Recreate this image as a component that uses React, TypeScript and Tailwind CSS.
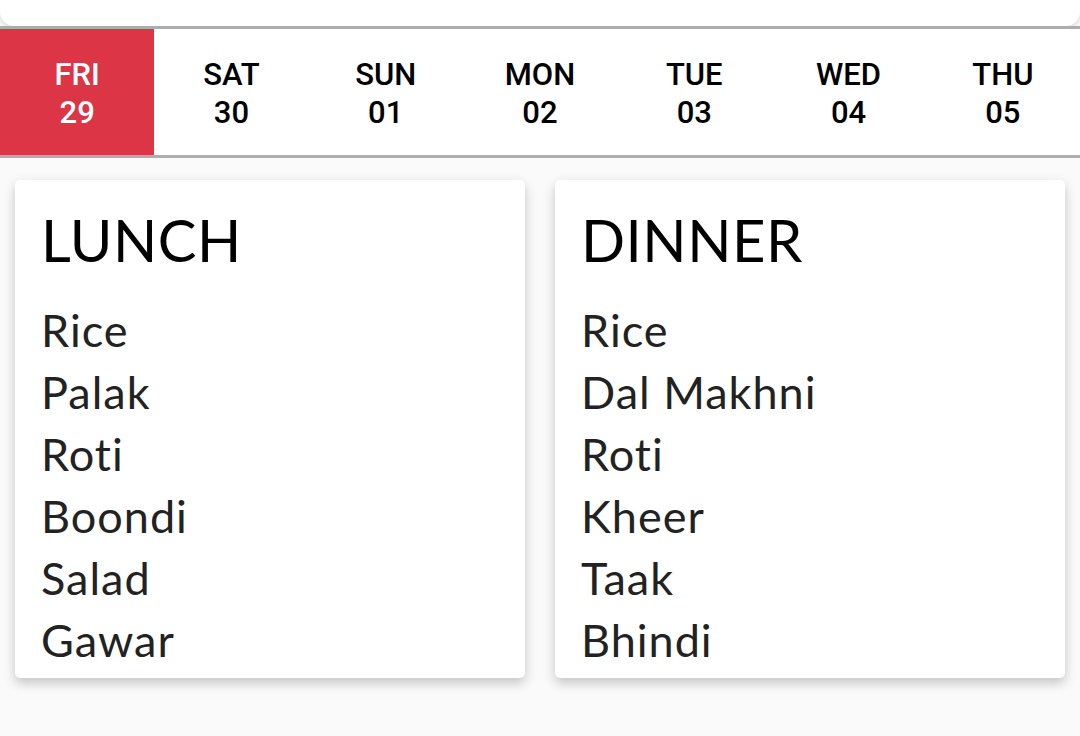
import React from "react";

const days = [
  { d: "FRI", n: "29", active: true },
  { d: "SAT", n: "30" },
  { d: "SUN", n: "01" },
  { d: "MON", n: "02" },
  { d: "TUE", n: "03" },
  { d: "WED", n: "04" },
  { d: "THU", n: "05" },
];

const meals = [
  { title: "LUNCH", items: ["Rice", "Palak", "Roti", "Boondi", "Salad", "Gawar"] },
  { title: "DINNER", items: ["Rice", "Dal Makhni", "Roti", "Kheer", "Taak", "Bhindi"] },
];

export default function App() {
  return (
    <div className="min-h-screen w-[1080px] bg-[#fafafa]">
      <div className="h-[26px] bg-white rounded-b-[14px] shadow-[0_1px_4px_rgba(0,0,0,0.18)]" />
      <div className="grid grid-cols-7 bg-white border-y-[3px] border-[#adadad] h-[132px] font-['Roboto',sans-serif] font-medium text-[31px] leading-[38px]">
        {days.map((x) => (
          <div
            key={x.d}
            className={
              x.active
                ? "flex flex-col items-center justify-center pt-[4px] bg-[#dc3545] text-white"
                : "flex flex-col items-center justify-center pt-[4px] text-black"
            }
          >
            <span>{x.d}</span>
            <span>{x.n}</span>
          </div>
        ))}
      </div>
      <div className="grid grid-cols-2 gap-[30px] px-[15px] pt-[22px] font-['Lato',sans-serif]">
        {meals.map((m) => (
          <div
            key={m.title}
            className="bg-white rounded-[5px] shadow-[0_5px_12px_rgba(0,0,0,0.22)] pl-[26px] pt-[25px] pb-[7px]"
          >
            <div className="text-[58px] leading-[70px] tracking-[0.5px] text-black font-normal">{m.title}</div>
            <div className="mt-[24px] text-[45px] leading-[62px] tracking-[1px] text-[#222]">
              {m.items.map((it) => (
                <div key={it}>{it}</div>
              ))}
            </div>
          </div>
        ))}
      </div>
    </div>
  );
}
